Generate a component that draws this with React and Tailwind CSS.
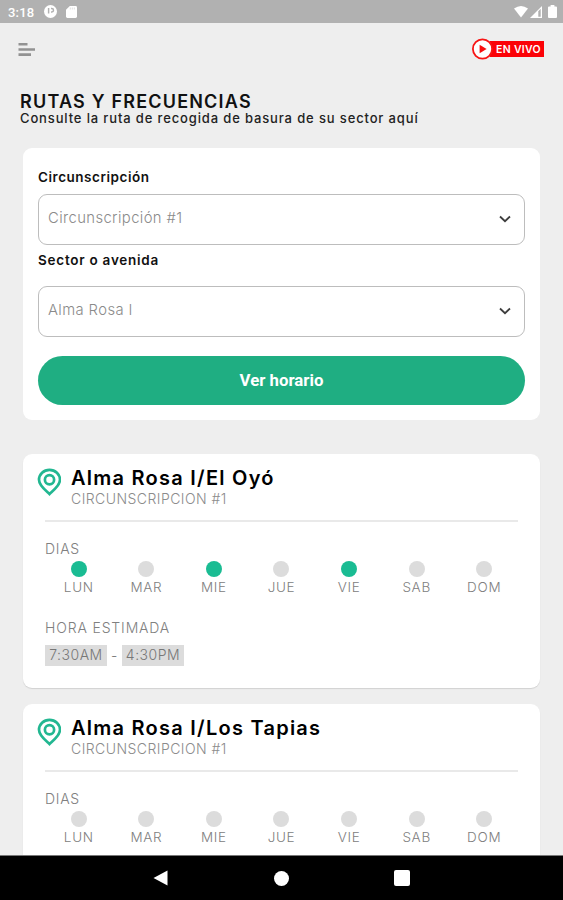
import clsx from "clsx";

const days = ["LUN", "MAR", "MIE", "JUE", "VIE", "SAB", "DOM"];

const routes = [
  { name: "Alma Rosa I/El Oyó", zone: "CIRCUNSCRIPCION #1", active: ["LUN", "MIE", "VIE"], from: "7:30AM", to: "4:30PM" },
  { name: "Alma Rosa I/Los Tapias", zone: "CIRCUNSCRIPCION #1", active: [] },
];

function StatusBar() {
  return (
    <div className="h-[23px] shrink-0 bg-[#b1b1b1] flex items-center justify-between pl-2 pr-[6px] text-white">
      <div className="flex items-center">
        <span className="w-[36px] pt-px font-['Roboto'] text-[13px] leading-none font-medium tracking-[0.2px]">3:18</span>
        <svg width="13" height="13" viewBox="0 0 13 13">
          <circle cx="6.5" cy="6.5" r="6.5" fill="#fff" />
          <path d="M4.6 3v5.5M7 3.6h0.8a1.7 1.7 0 0 1 0 3.4H7" fill="none" stroke="#b1b1b1" strokeWidth="1.5" />
        </svg>
        <svg className="ml-[9px]" width="11" height="12" viewBox="0 0 11 12">
          <path d="M3.8 0H9.6Q11 0 11 1.4V10.6Q11 12 9.6 12H1.4Q0 12 0 10.6V3.8Z" fill="#fff" />
          <path d="M4.3 1.5v2M6.3 1.5v2M8.3 1.5v2" stroke="#d5d5d5" strokeWidth="0.8" />
        </svg>
      </div>
      <div className="flex items-center">
        <svg width="14" height="12" viewBox="0 0 14 12">
          <path d="M0 2.6Q7-2.4 14 2.6L7 11.5Z" fill="#fff" />
        </svg>
        <svg className="ml-[2px]" width="12" height="12" viewBox="0 0 12 12">
          <path d="M12 0V12H0Z" fill="#fff" />
          <path d="M8.3 5.2 10.7 2.8V10.8H8.3Z" fill="#b1b1b1" />
        </svg>
        <svg className="ml-[6px]" width="9" height="13" viewBox="0 0 9 13">
          <path d="M2.6 0H6.4V1.4H8Q9 1.4 9 2.4V12Q9 13 8 13H1Q0 13 0 12V2.4Q0 1.4 1 1.4H2.6Z" fill="#fff" />
        </svg>
      </div>
    </div>
  );
}

function Header() {
  return (
    <div className="h-[52px] shrink-0 flex items-center justify-between pl-[18px] pr-[19px]">
      <svg width="17" height="14" viewBox="0 0 17 14" stroke="#929292" strokeWidth="2.6">
        <path d="M0.5 2.3H9.5M0.5 7.5H17M0.5 12.6H13" />
      </svg>
      <div className="flex items-center">
        <svg className="relative z-10" width="21" height="22" viewBox="0 0 21 22">
          <circle cx="10.5" cy="11" r="9.6" fill="#fff" stroke="#f81414" strokeWidth="1.8" />
          <path d="M7.6 6.8 14.6 11 7.6 15.2Z" fill="#f80d0d" />
        </svg>
        <span className="-ml-[3px] h-4 w-[54px] bg-[#fb0207] flex items-center pt-[2px] pl-[6px] font-['Inter'] text-[10.5px] leading-none font-semibold text-white tracking-[0.3px] whitespace-nowrap">
          EN VIVO
        </span>
      </div>
    </div>
  );
}

function Select({ value }) {
  return (
    <button className="h-[51px] w-full rounded-[9px] border border-[#bdbdbd] bg-white flex items-center justify-between pl-[9px] pr-[12.5px]">
      <span className="mb-[2px] text-[14.8px] font-light text-[#8a8a8a] tracking-[0.4px]">{value}</span>
      <svg className="mb-px" width="14" height="10" viewBox="0 0 14 10" fill="none" stroke="#3d3d3d" strokeWidth="1.8">
        <path d="M2 2.5 7 7.2 12 2.5" />
      </svg>
    </button>
  );
}

function SearchCard() {
  return (
    <div className="mx-[23px] h-[272px] shrink-0 rounded-[9px] bg-white px-[15px] pt-[19px] flex flex-col">
      <label className="h-5 leading-5 text-[13.5px] font-semibold text-[#111] tracking-[0.53px]">Circunscripción</label>
      <div className="mt-[7px]">
        <Select value="Circunscripción #1" />
      </div>
      <label className="mt-[5px] h-5 leading-5 text-[13.5px] font-semibold text-[#111] tracking-[0.75px]">Sector o avenida</label>
      <div className="mt-4">
        <Select value="Alma Rosa I" />
      </div>
      <button className="mt-[19px] h-[49px] w-full rounded-full bg-[#1fae82] pt-px font-['Roboto'] text-[16.8px] font-bold text-white">
        Ver horario
      </button>
    </div>
  );
}

function PinIcon() {
  return (
    <svg width="24" height="28" viewBox="0 0 24 28" fill="none" stroke="#22b791" strokeWidth="2.7">
      <path d="M12.5 26C10 23.5 2 18 2 11.8A10.5 10 0 0 1 23 11.8C23 18 15 23.5 12.5 26Z" />
      <circle cx="12.5" cy="11.8" r="4.6" />
    </svg>
  );
}

function RouteCard({ route }) {
  return (
    <div className="mx-[23px] h-[234px] shrink-0 rounded-[9px] bg-white px-[22px] pt-[14px] shadow-[0_1px_1px_rgba(0,0,0,0.12)]">
      <div className="-ml-2 flex">
        <PinIcon />
        <div className="ml-[10px]">
          <h2 className="h-[22px] leading-[20px] text-[20px] font-semibold text-black tracking-[1.25px] whitespace-nowrap">{route.name}</h2>
          <p className="h-[18px] leading-[18px] text-[14px] font-light text-[#8c8c8c] tracking-[0.45px]">{route.zone}</p>
        </div>
      </div>

      <div className="mt-[12px] h-[2px] bg-[#e9e9e9]" />

      <p className="mt-[17px] h-5 leading-5 text-[14px] font-light text-[#808080] tracking-[0.7px]">DIAS</p>
      <div className="mt-[2px] grid grid-cols-7">
        {days.map((day) => (
          <div key={day} className="flex flex-col items-center">
            <span className={clsx("size-4 rounded-full", route.active.includes(day) ? "bg-[#1abc93]" : "bg-[#dcdcdc]")} />
            <span className="h-5 leading-5 text-[13.5px] font-light text-[#808080] tracking-[0.7px]">{day}</span>
          </div>
        ))}
      </div>

      {/* sin días asignados no hay horario */}
      {route.active.length > 0 && (
        <>
          <p className="mt-[21px] h-5 leading-5 text-[14px] font-light text-[#808080] tracking-[0.85px]">HORA ESTIMADA</p>
          <div className="mt-[7px] flex items-center text-[14px] font-light text-[#777] tracking-[0.5px]">
            <span className="h-[21px] w-[62px] bg-[#dcdcdc] text-center leading-[19px]">{route.from}</span>
            <span className="w-[15px] text-center leading-[19px]">-</span>
            <span className="h-[21px] w-[62px] bg-[#dcdcdc] text-center leading-[19px]">{route.to}</span>
          </div>
        </>
      )}
    </div>
  );
}

function NavBar() {
  return (
    <div className="h-[45px] shrink-0 border-t border-[#777] bg-black flex items-center justify-center">
      <svg className="mr-[106px]" width="15" height="16" viewBox="0 0 15 16">
        <path d="M14.5 0.5V15.5L0.5 8Z" fill="#fff" />
      </svg>
      <span className="size-[15px] rounded-full bg-white" />
      <span className="ml-[105px] size-4 rounded-[2px] bg-white" />
    </div>
  );
}

export default function App() {
  return (
    <div className="h-[900px] w-[563px] overflow-hidden bg-[#eeeeee] flex flex-col font-['Inter',sans-serif]">
      <StatusBar />
      <div className="flex-1 min-h-0 overflow-hidden flex flex-col">
        <Header />
        <div className="h-[73px] shrink-0 pl-5 pt-[18px]">
          <h1 className="h-[17px] leading-[18px] text-[18px] font-semibold text-[#111] tracking-[1.2px]">RUTAS Y FRECUENCIAS</h1>
          <p className="h-4 leading-4 text-[13px] font-medium text-[#222] tracking-[0.86px] whitespace-nowrap">
            Consulte la ruta de recogida de basura de su sector aquí
          </p>
        </div>
        <SearchCard />
        <div className="mt-[34px] flex flex-col gap-[15.5px]">
          {routes.map((route) => (
            <RouteCard key={route.name} route={route} />
          ))}
        </div>
      </div>
      <NavBar />
    </div>
  );
}
